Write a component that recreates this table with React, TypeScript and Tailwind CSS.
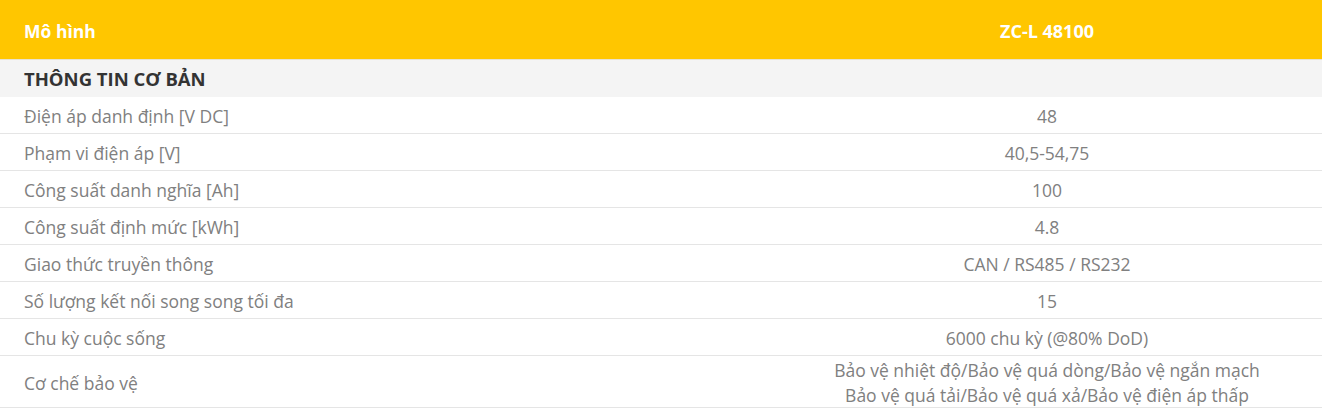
import React from "react";

const rows: [string, string[]][] = [
  ["Điện áp danh định [V DC]", ["48"]],
  ["Phạm vi điện áp [V]", ["40,5-54,75"]],
  ["Công suất danh nghĩa [Ah]", ["100"]],
  ["Công suất định mức [kWh]", ["4.8"]],
  ["Giao thức truyền thông", ["CAN / RS485 / RS232"]],
  ["Số lượng kết nối song song tối đa", ["15"]],
  ["Chu kỳ cuộc sống", ["6000 chu kỳ (@80% DoD)"]],
  [
    "Cơ chế bảo vệ",
    [
      "Bảo vệ nhiệt độ/Bảo vệ quá dòng/Bảo vệ ngắn mạch",
      "Bảo vệ quá tải/Bảo vệ quá xả/Bảo vệ điện áp thấp",
    ],
  ],
];

export default function App() {
  return (
    <div
      className="w-[1322px] h-[411px] bg-white overflow-hidden"
      style={{ fontFamily: '"Open Sans", "Noto Sans", sans-serif' }}
    >
      <div className="grid grid-cols-[772px_1fr] h-[60px] bg-[#ffc600] border-b border-[#e8e2d0] items-center text-white font-bold text-[17.5px] pt-[3px]">
        <div className="pl-6">Mô hình</div>
        <div className="text-center text-[18px]">ZC-L 48100</div>
      </div>
      <div className="h-[37px] bg-[#f4f4f4] flex items-center pl-6 pt-[1px] font-bold text-[18.5px] text-[#333]">
        THÔNG TIN CƠ BẢN
      </div>
      {rows.map(([label, vals]) => (
        <div
          key={label}
          className={`grid grid-cols-[772px_1fr] items-center border-b border-[#e5e5e5] text-[17.5px] text-[#808080] pt-[2px] ${
            vals.length > 1 ? "h-[52px]" : "h-[37px]"
          }`}
        >
          <div className="pl-6">{label}</div>
          <div className="text-center leading-[25px]">
            {vals.map((v) => (
              <div key={v}>{v}</div>
            ))}
          </div>
        </div>
      ))}
    </div>
  );
}
